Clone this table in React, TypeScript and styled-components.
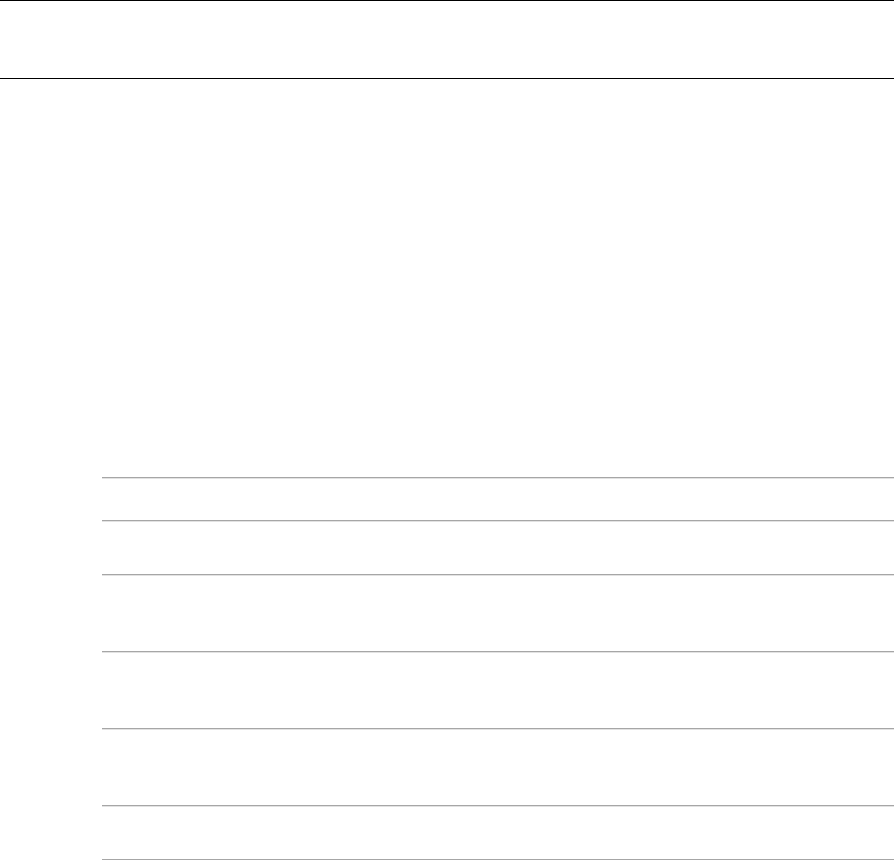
import styled, { createGlobalStyle } from 'styled-components';

const GlobalStyle = createGlobalStyle`
	html, body {
		margin: 0;
		padding: 0;
		background: #ffffff;
		font-family: 'Liberation Sans', Arial, sans-serif;
	}
`;

const Page = styled.div`
	display: flex;
	flex-direction: column;
	width: 100%;
`;

const Header = styled.header`
	height: 77px;
	border-top: 1px solid #000000;
	border-bottom: 1px solid #000000;
`;

const Hero = styled.section`
	height: 398px;
`;

const Table = styled.div`
	display: flex;
	flex-direction: column;
	margin-left: 102px;
`;

const Rule = styled.div`
	height: 0;
	border-top: 1px solid #a6a6a6;
	border-bottom: 1px solid #e2e2e2;
`;

const Row = styled.div<{ $h: number }>`
	height: ${({ $h }) => $h}px;
`;

const rows = [41, 52, 75, 75, 75, 52];

export default function App() {
	return (
		<>
			<GlobalStyle />
			<Page>
				<Header />
				<Hero />
				<Table>
					<Rule />
					{rows.map((h, i) => (
						<div key={i}>
							<Row $h={h} />
							<Rule />
						</div>
					))}
				</Table>
			</Page>
		</>
	);
}
